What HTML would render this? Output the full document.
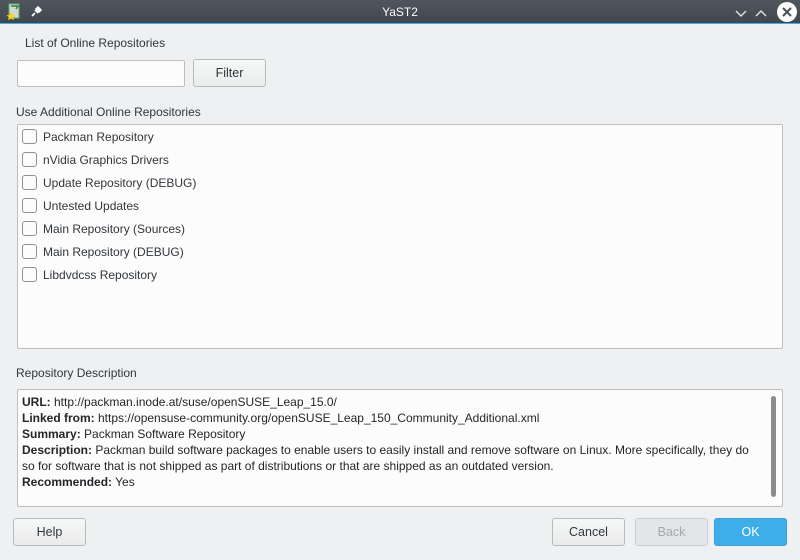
<!DOCTYPE html>
<html><head><meta charset="utf-8"><style>
*{box-sizing:border-box;margin:0;padding:0}
body{width:800px;height:560px;background:#eff0f1;font-family:"Liberation Sans",sans-serif;font-size:12px;color:#31363b;position:relative;overflow:hidden}
.abs{position:absolute}
.title{left:0;top:0;width:800px;height:24px;background:linear-gradient(#4f565d,#41474d);border-bottom:1px solid #3daee9}
.btn{position:absolute;height:28px;border:1px solid #b8babc;border-radius:3px;background:linear-gradient(#f6f7f7,#eaebec);text-align:center;line-height:26px;font-size:12.5px}
.box{position:absolute;background:#fcfcfc;border:1px solid #bcbebf;border-radius:2px}
.item{position:absolute;left:22px;height:16px;font-size:12px;line-height:16px}
.item i{position:absolute;left:0;top:0;width:15px;height:15px;border:1px solid #8f9295;border-radius:3px;background:#fcfcfc}
.item span{position:absolute;left:21px;white-space:nowrap}
.desc{position:absolute;left:22px;top:394px;font-size:12px;line-height:16px;width:735px;color:#232629}
.desc b{font-weight:bold}
</style></head><body>
<div class="abs title"></div>
<svg class="abs" style="left:6px;top:3px" width="16" height="18" viewBox="0 0 16 18"><rect x="3" y="1" width="10" height="14" fill="#cfd8cf" stroke="#6a7" /><path d="M5 3h7l-2 3" stroke="#2a8a3a" fill="none" stroke-width="1.5"/><path d="M5 9l1.5 3 3 .3-2.3 2 .8 3-3-1.7-3 1.7.8-3L.5 12.3l3-.3z" fill="#f5d31a"/></svg>
<svg class="abs" style="left:30px;top:6px" width="12" height="12" viewBox="0 0 12 12"><path d="M2 10l3-3M5 4l3 3M6 3l3 3 2-2-3-3z" stroke="#fff" stroke-width="1.6" fill="#fff"/></svg>
<div class="abs" style="left:0;top:5px;width:800px;text-align:center;color:#fcfcfc;font-size:12px">YaST2</div>
<svg class="abs" style="left:735px;top:8px" width="60" height="12" viewBox="0 0 60 12"><path d="M1 3l5 5 5-5M21 8l5-5 5 5" stroke="#e0e3e6" stroke-width="1.4" fill="none"/></svg>
<svg class="abs" style="left:776px;top:1px" width="22" height="22"><circle cx="11" cy="11" r="10" fill="#fcfcfc"/><path d="M7 7l8 8M15 7l-8 8" stroke="#4a5057" stroke-width="2"/></svg>

<div class="abs" style="left:25px;top:36px;font-size:12px">List of Online Repositories</div>
<div class="box" style="left:17px;top:60px;width:168px;height:27px"></div>
<div class="btn" style="left:193px;top:59px;width:73px">Filter</div>
<div class="abs" style="left:16px;top:105px;font-size:12px">Use Additional Online Repositories</div>
<div class="box" style="left:17px;top:124px;width:766px;height:225px"></div>
<div class="item" style="top:129px"><i></i><span>Packman Repository</span></div>
<div class="item" style="top:152px"><i></i><span>nVidia Graphics Drivers</span></div>
<div class="item" style="top:175px"><i></i><span>Update Repository (DEBUG)</span></div>
<div class="item" style="top:198px"><i></i><span>Untested Updates</span></div>
<div class="item" style="top:221px"><i></i><span>Main Repository (Sources)</span></div>
<div class="item" style="top:244px"><i></i><span>Main Repository (DEBUG)</span></div>
<div class="item" style="top:267px"><i></i><span>Libdvdcss Repository</span></div>

<div class="abs" style="left:16px;top:366px;font-size:12px">Repository Description</div>
<div class="box" style="left:17px;top:389px;width:766px;height:118px"></div>
<div class="abs" style="left:771px;top:396px;width:5px;height:101px;background:#8a8d90;border-radius:3px"></div>
<div class="desc"><b>URL:</b> http://packman.inode.at/suse/openSUSE_Leap_15.0/<br><b>Linked from:</b> https://opensuse-community.org/openSUSE_Leap_150_Community_Additional.xml<br><b>Summary:</b> Packman Software Repository<br><b>Description:</b> Packman build software packages to enable users to easily install and remove software on Linux. More specifically, they do<br>so for software that is not shipped as part of distributions or that are shipped as an outdated version.<br><b>Recommended:</b> Yes</div>

<div class="btn" style="left:13px;top:518px;width:73px">Help</div>
<div class="btn" style="left:552px;top:518px;width:73px">Cancel</div>
<div class="btn" style="left:635px;top:518px;width:73px;background:#e3e5e7;border-color:#ccced0;color:#a6a9ac">Back</div>
<div class="btn" style="left:714px;top:518px;width:73px;background:#3daee9;border-color:#3a9fd6;color:#fff">OK</div>
</body></html>
